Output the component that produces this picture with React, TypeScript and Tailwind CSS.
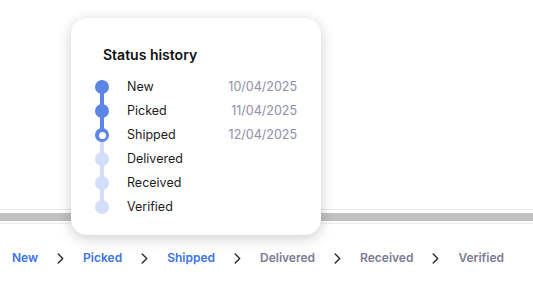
const history = [
  { label: "New", date: "10/04/2025", state: "done" },
  { label: "Picked", date: "11/04/2025", state: "done" },
  { label: "Shipped", date: "12/04/2025", state: "current" },
  { label: "Delivered", date: "", state: "todo" },
  { label: "Received", date: "", state: "todo" },
  { label: "Verified", date: "", state: "todo" },
];

const steps = [
  { label: "New", active: true },
  { label: "Picked", active: true },
  { label: "Shipped", active: true },
  { label: "Delivered", active: false },
  { label: "Received", active: false },
  { label: "Verified", active: false },
];

function lineColor(state: string) {
  return state === "todo" ? "bg-[#d3defb]" : "bg-[#5b86e5]";
}

function Dot({ state }: { state: string }) {
  if (state === "current") {
    return (
      <div className="relative z-10 w-[14px] h-[14px] rounded-full bg-[#5b86e5] flex items-center justify-center">
        <div className="w-[7px] h-[7px] rounded-full bg-white" />
      </div>
    );
  }
  return (
    <div
      className={`relative z-10 w-[14px] h-[14px] rounded-full ${
        state === "done" ? "bg-[#5b86e5]" : "bg-[#d3defb]"
      }`}
    />
  );
}

function Chevron() {
  return (
    <svg width="7" height="11" viewBox="0 0 7 11" fill="none" className="shrink-0">
      <path d="M1.2 1 L5.7 5.5 L1.2 10" stroke="#2a2a2a" strokeWidth="1.4" strokeLinecap="round" strokeLinejoin="round" />
    </svg>
  );
}

export default function App() {
  return (
    <div className="relative w-[533px] h-[284px] bg-white overflow-hidden font-['Inter',sans-serif]">
      {/* background content */}
      <div className="h-[209px]" />
      <div className="h-px bg-[#e6e6e6]" />
      <div className="h-[3px]" />
      <div className="h-[8px] bg-[#c1c1c1]" />
      <div className="h-px bg-[#ededed] mt-[2px]" />

      <div className="flex items-center gap-[19px] pl-[12px] mt-[25px] text-[12px] font-semibold">
        {steps.map((s, i) => (
          <div key={s.label} className="flex items-center gap-[19px]">
            <span className={s.active ? "text-[#3b73e8]" : "text-[#7b7b94]"}>{s.label}</span>
            {i < steps.length - 1 && <Chevron />}
          </div>
        ))}
      </div>

      {/* popover */}
      <div className="absolute left-[71px] top-[18px] w-[250px] h-[217px] bg-white rounded-[16px] shadow-[0_3px_14px_rgba(0,0,0,0.2)] pl-[24px] pr-[24px] pt-[27px]">
        <h3 className="ml-[8px] text-[14px] font-semibold text-[#111] leading-[20px]">Status history</h3>
        <div className="mt-[10px]">
          {history.map((h, i) => (
            <div key={h.label} className="flex items-center h-[24px]">
              <div className="relative w-[14px] h-[24px] flex items-center justify-center">
                {i > 0 && (
                  <div className={`absolute left-[5px] top-0 h-[12px] w-[4px] ${lineColor(h.state)}`} />
                )}
                {i < history.length - 1 && (
                  <div className={`absolute left-[5px] top-[12px] h-[12px] w-[4px] ${lineColor(history[i + 1].state)}`} />
                )}
                <Dot state={h.state} />
              </div>
              <span className="ml-[18px] text-[12.5px] text-[#1c1c1c]">{h.label}</span>
              <span className="ml-auto text-[12.5px] text-[#8e8ea6]">{h.date}</span>
            </div>
          ))}
        </div>
      </div>
    </div>
  );
}
